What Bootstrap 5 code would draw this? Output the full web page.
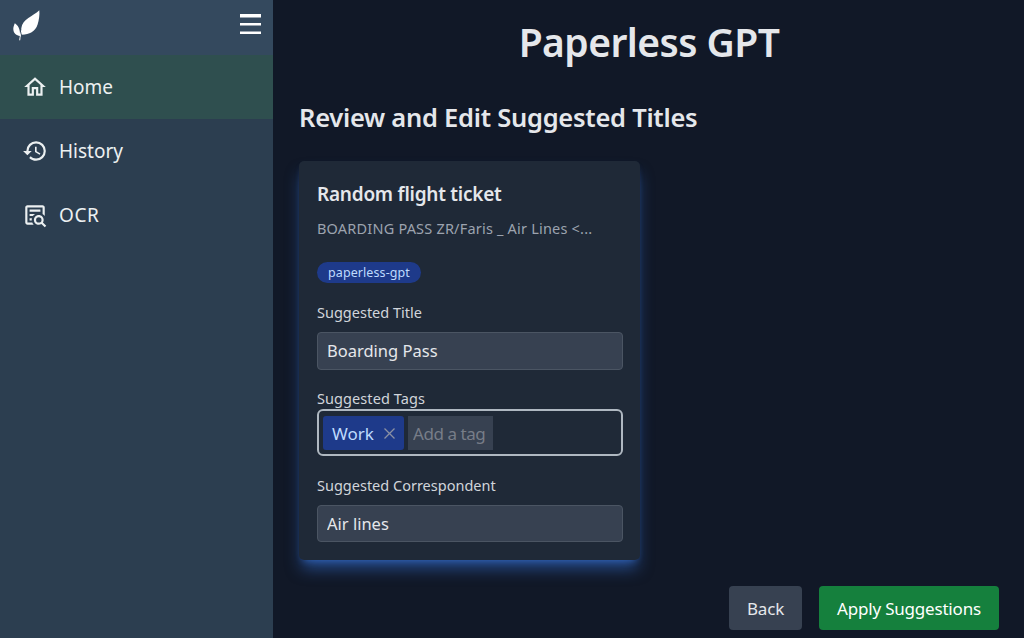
<!DOCTYPE html>
<html lang="en">
<head>
<meta charset="utf-8">
<meta name="viewport" content="width=device-width, initial-scale=1">
<title>Paperless GPT</title>
<link href="https://cdn.jsdelivr.net/npm/bootstrap@5.3.0/dist/css/bootstrap.min.css" rel="stylesheet">
<style>
body{font-family:"Noto Sans",sans-serif;font-size:17.5px;background:#111827;color:#e5e7eb;height:100vh;overflow:hidden}
.side{width:273px;background:#2c3e50}
.side-top{height:55px;background:#34495e;padding:0 12px 6px 13px}
.side-link{height:64px;padding:0 22px 0 22px;gap:11px;color:#ecf0f1;font-size:19px}
.side-link .t{padding-top:1px}
.side-link.active{background:#2f4f4f}
.burger{width:21px;height:21px;border:0;padding:0;background:none}
.main-area{padding:0 25px 0 26px}
.page-title{font-size:39px;font-weight:600;line-height:44px;letter-spacing:-.55px;margin:20px 0 0}
.page-sub{font-size:25.5px;font-weight:600;line-height:36px;letter-spacing:-.26px;margin:35px 0 26px}
.doc{width:341px;height:399px;background:#1f2937;border-radius:5px;padding:18px 17px 18px 18px;box-shadow:0 11px 16px -3px rgba(59,130,246,.5),0 4px 7px -4px rgba(59,130,246,.5)}
.doc > *{flex-shrink:0}
.doc-title{font-size:19px;font-weight:600;line-height:30px;letter-spacing:-.24px;margin:0}
.doc-text{font-size:14.5px;line-height:22px;letter-spacing:.2px;color:#9ca3af;margin:8px 0 23px}
.pill{background:#1e3a8a;color:#bfdbfe;font-size:12.5px;line-height:21px;letter-spacing:.09px;height:21px;border-radius:11px;padding:0 11px;width:104px}
.lbl{font-size:14.5px;line-height:22px;color:#d1d5db;margin:18px 0 1px}
.lbl-tags{margin:17px 0 0;letter-spacing:.08px}
.field{height:38px;background:#374151;border:1px solid #4b5563;border-radius:4px;padding:0 9px 1px;color:#e5e7eb;font-size:16.5px}
.field-last{height:37px}
.field:focus{background:#374151;color:#e5e7eb}
.tags{height:47px;border:2px solid #afb8c1;border-radius:6px;padding:0 4px;gap:4px}
.tag-item{width:81px;height:34px;border-radius:3px;background:#1e3a8a;color:#bfdbfe;padding:2px 9px 0;font-size:17px}
.tag-new{width:85px;height:34px;background:#374151;border:0;padding:1px 5px 0;font-size:17px;letter-spacing:-.45px;color:#e5e7eb}
.tag-new::placeholder{color:#777d88;opacity:1}
.act{height:44px;border-radius:4px;border:0;font-size:17px;padding:1px 0 0;letter-spacing:-.2px}
.act-back{width:73px;background:#374151;color:#e5e7eb}
.act-apply{width:180px;background:#15803d;color:#fff}
.t{white-space:nowrap}
</style>
</head>
<body class="d-flex">
<aside class="side flex-shrink-0 h-100">
  <div class="side-top d-flex align-items-center justify-content-between">
    <svg width="27" height="32" viewBox="0 0 27 32" fill="#fff"><path d="M26.300 1.200C20 7.500 9.500 9.500 8.300 19.200C8.200 21.800 8.600 24 9.200 25.800C16 25.500 22.500 22.500 24.600 15.500C26 10.500 26.800 6 26.300 1.200Z"/><path d="M1.800 14.200C4.500 16 7.600 19.500 7 27C3.500 26.600 .4 24.500 .3 20C.3 17.800 1.200 16 1.800 14.200Z"/><path d="M9 21C8 24 6.900 28 6.700 31.300" fill="none" stroke="#fff"/></svg>
    <button class="burger d-flex" aria-label="Menu"><svg width="21" height="21" fill="#fff"><path d="M0 0h21v3.500H0zM0 9h21v2.500H0zM0 17.500h21v2.500H0z"/></svg></button>
  </div>
  <nav class="d-flex flex-column">
    <a class="side-link active d-flex align-items-center text-decoration-none" href="#"><svg width="26" height="26" viewBox="0 0 24 24" fill="currentColor"><path d="M12 5.690l5 4.500V18h-2v-6H9v6H7v-7.810l5-4.500M12 3L2 12h3v8h6v-6h2v6h6v-8h3z"/></svg><span class="t">Home</span></a>
    <a class="side-link d-flex align-items-center text-decoration-none" href="#"><svg width="26" height="26" viewBox="0 0 24 24" fill="currentColor"><path d="M13.500,8H12V13L16.280,15.540L17,14.330L13.500,12.250V8M13,3A9,9 0 0,0 4,12H1L4.960,16.030L9,12H6A7,7 0 0,1 13,5A7,7 0 0,1 20,12A7,7 0 0,1 13,19C11.070,19 9.320,18.210 8.060,16.940L6.640,18.360C8.270,20 10.500,21 13,21A9,9 0 0,0 22,12A9,9 0 0,0 13,3"/></svg><span class="t">History</span></a>
    <a class="side-link d-flex align-items-center text-decoration-none" href="#"><svg width="26" height="26" viewBox="0 0 24 24" fill="currentColor"><path d="M15.500,12C18,12 20,14 20,16.500C20,17.380 19.750,18.210 19.310,18.900L22.390,22L21,23.390L17.880,20.320C17.190,20.750 16.370,21 15.500,21C13,21 11,19 11,16.500C11,14 13,12 15.500,12M15.500,14A2.500,2.500 0 0,0 13,16.500A2.500,2.500 0 0,0 15.500,19A2.500,2.500 0 0,0 18,16.500A2.500,2.500 0 0,0 15.500,14M5,3H19C20.110,3 21,3.890 21,5V13.030C20.500,12.230 19.810,11.540 19,11V5H5V19H9.500C9.810,19.750 10.260,20.420 10.810,21H5C3.890,21 3,20.110 3,19V5C3,3.890 3.890,3 5,3M7,7H17V9H7V7M7,11H12.030C11.230,11.500 10.540,12.200 10,13H7V11M7,15H9.170C9.060,15.500 9,16 9,16.500V17H7V15Z"/></svg><span class="t" style="letter-spacing:.6px">OCR</span></a>
  </nav>
</aside>
<main class="main-area flex-grow-1 d-flex flex-column">
  <h1 class="page-title text-center"><span class="t">Paperless GPT</span></h1>
  <h2 class="page-sub"><span class="t">Review and Edit Suggested Titles</span></h2>
  <section class="doc d-flex flex-column">
    <h3 class="doc-title"><span class="t">Random flight ticket</span></h3>
    <p class="doc-text"><span class="t">BOARDING PASS ZR/Faris _ Air Lines &lt;...</span></p>
    <span class="pill t">paperless-gpt</span>
    <label class="lbl" for="title"><span class="t">Suggested Title</span></label>
    <input id="title" class="field form-control mt-2" value="Boarding Pass">
    <label class="lbl lbl-tags" for="newtag"><span class="t">Suggested Tags</span></label>
    <div class="tags d-flex align-items-center">
      <span class="tag-item d-flex align-items-center justify-content-between"><span class="t">Work</span><svg width="11" height="11" stroke="#8b91a3" stroke-width="1.300"><path d="M.5 .5l10 10M10.500 .5l-10 10"/></svg></span>
      <input id="newtag" class="tag-new" placeholder="Add a tag">
    </div>
    <label class="lbl" for="corr"><span class="t">Suggested Correspondent</span></label>
    <input id="corr" class="field field-last form-control mt-2" value="Air lines">
  </section>
  <div class="d-flex justify-content-end mt-auto mb-2" style="gap:17px">
    <button class="btn act act-back t">Back</button>
    <button class="btn act act-apply t">Apply Suggestions</button>
  </div>
</main>
<script src="https://cdn.jsdelivr.net/npm/bootstrap@5.3.0/dist/js/bootstrap.bundle.min.js"></script>
</body>
</html>
